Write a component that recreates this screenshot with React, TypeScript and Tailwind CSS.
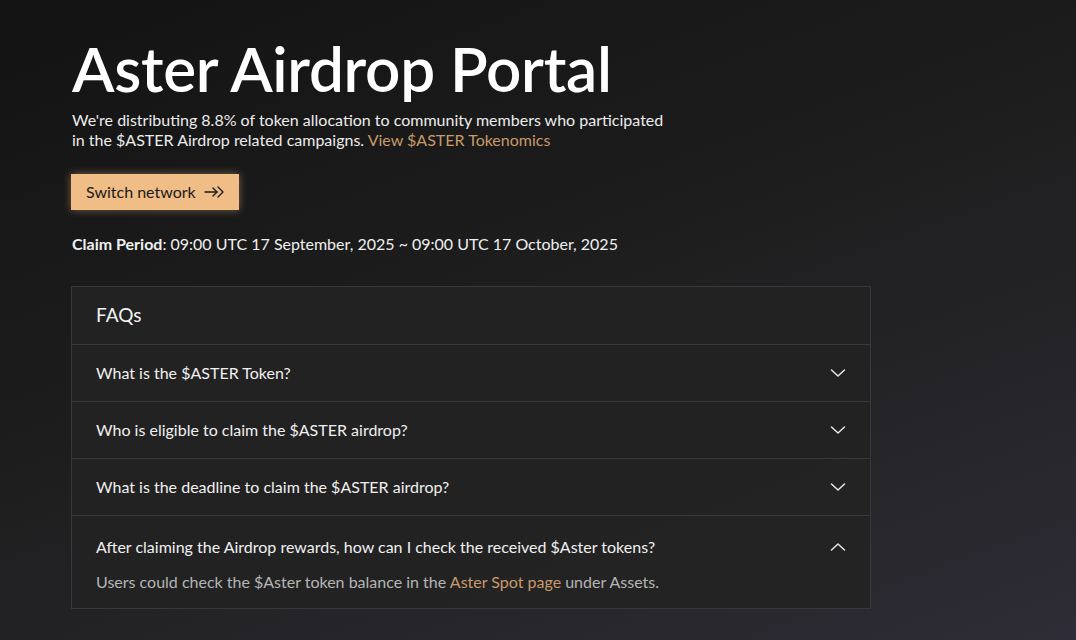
const faqs = [
  { q: "What is the $ASTER Token?", open: false },
  { q: "Who is eligible to claim the $ASTER airdrop?", open: false },
  { q: "What is the deadline to claim the $ASTER airdrop?", open: false },
  { q: "After claiming the Airdrop rewards, how can I check the received $Aster tokens?", open: true },
];

function ArrowIcon() {
  return (
    <svg width="20" height="14" viewBox="0 0 20 14" fill="none" stroke="currentColor" strokeWidth="1.4" strokeLinecap="round" strokeLinejoin="round">
      <path d="M1 7h12" />
      <path d="M9 3l4 4-4 4" />
      <path d="M14 2l5 5-5 5" />
    </svg>
  );
}

function Chevron({ up }: { up?: boolean }) {
  return (
    <svg width="16" height="10" viewBox="0 0 16 10" fill="none" stroke="currentColor" strokeWidth="1.5" strokeLinecap="round" strokeLinejoin="round" className="text-[#e8e8e8]">
      {up ? <path d="M1.5 8L8 2l6.5 6" /> : <path d="M1.5 2L8 8l6.5-6" />}
    </svg>
  );
}

export default function App() {
  return (
    <div
      className="min-h-[640px] w-full bg-[linear-gradient(160deg,#131313_0%,#1c1c1c_40%,#262529_75%,#2e2c36_100%)] text-white"
      style={{ fontFamily: "Lato, 'Noto Sans', sans-serif" }}
    >
      <div className="pl-[72px] pt-[33px] w-[871px]">
        <h1 className="text-[62px] leading-[70px] font-semibold tracking-[-0.3px] text-white">Aster Airdrop Portal</h1>
        <p className="mt-[7px] text-[16px] leading-[20px] text-[#ececec] w-[600px]">
          We're distributing 8.8% of token allocation to community members who participated in the $ASTER Airdrop related campaigns.{" "}
          <span className="text-[#c8996a]">View $ASTER Tokenomics</span>
        </p>
        <button className="mt-[24px] -ml-px h-[36px] px-[15px] flex items-center gap-[8px] bg-[#efbd85] text-[#1a1a1a] text-[16px] shadow-[0_0_8px_rgba(239,189,133,0.45)]">
          Switch network
          <ArrowIcon />
        </button>
        <p className="mt-[24px] text-[16px] leading-[20px] text-[#f0f0f0]">
          <span className="font-bold">Claim Period</span>: 09:00 UTC 17 September, 2025 ~ 09:00 UTC 17 October, 2025
        </p>

        <div className="mt-[32px] -ml-px border border-[#383838] bg-[#232323]/95">
          <div className="h-[58px] px-[24px] flex items-center border-b border-[#383838]">
            <span className="text-[19px] text-[#f2f2f2]">FAQs</span>
          </div>
          {faqs.map((f, i) => (
            <div key={i} className={i < faqs.length - 1 ? "border-b border-[#383838]" : ""}>
              <div className={`${f.open ? "h-[60px] pt-[2px]" : "h-[56px]"} pl-[24px] pr-[24px] flex items-center justify-between`}>
                <span className="text-[16px] text-[#f0f0f0]">{f.q}</span>
                <Chevron up={f.open} />
              </div>
              {f.open && (
                <div className="px-[24px] pb-[16px] -mt-[4px] text-[16px] leading-[20px] text-[#b5b5b5]">
                  Users could check the $Aster token balance in the <span className="text-[#c8996a]">Aster Spot page</span> under Assets.
                </div>
              )}
            </div>
          ))}
        </div>
      </div>
    </div>
  );
}
